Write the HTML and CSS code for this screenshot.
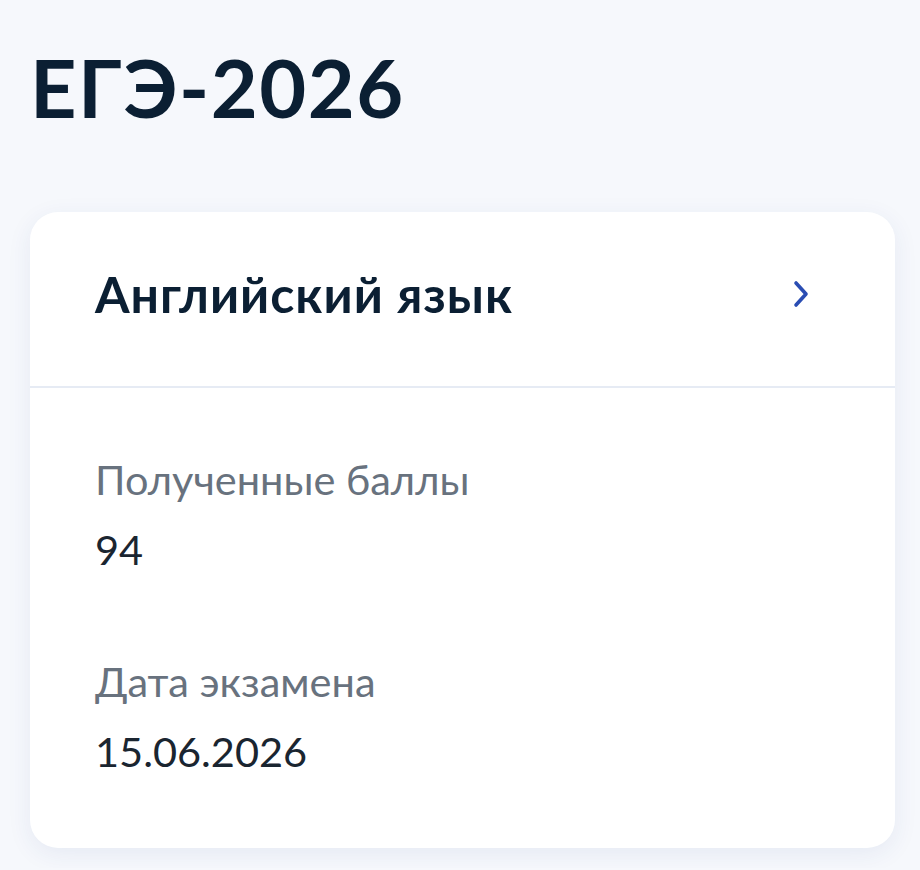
FILE: index.html
```html
<!DOCTYPE html>
<html lang="ru">
<head>
    <meta charset="UTF-8">
    <meta name="viewport" content="width=device-width, initial-scale=1.0">
    <title>ЕГЭ-2026</title>
    <link rel="stylesheet" href="styles.css">
</head>
<body>
    <div class="page">
        <h1 class="page-title">ЕГЭ-2026</h1>

        <div class="exam-card">
            <a class="exam-head" href="#">
                <span class="exam-subject">Английский язык</span>
                <svg class="chevron" width="18" height="28" viewBox="0 0 18 28">
                    <path d="M4 3 L14 14 L4 25" fill="none" stroke="#2a4db3" stroke-width="3.6" stroke-linecap="round" stroke-linejoin="round"/>
                </svg>
            </a>

            <div class="exam-body">
                <div class="field">
                    <div class="field-label">Полученные баллы</div>
                    <div class="field-value">94</div>
                </div>
                <div class="field">
                    <div class="field-label">Дата экзамена</div>
                    <div class="field-value">15.06.2026</div>
                </div>
            </div>
        </div>
    </div>
</body>
</html>
```

FILE: styles.css
```css
body {
    margin: 0;
    background: #f6f8fc;
    font-family: Lato, "Noto Sans", sans-serif;
    color: #0b1f33;
}

.page {
    padding: 38px 25px 20px 30px;
}

.page-title {
    margin: 0 0 77px;
    font-size: 81px;
    font-weight: 700;
    line-height: 1.2;
    letter-spacing: 1.5px;
    color: #0b1f33;
}

.exam-card {
    background: #fff;
    border-radius: 28px;
    box-shadow: 0 6px 24px rgba(40, 70, 140, 0.08);
}

.exam-head {
    display: flex;
    align-items: center;
    justify-content: space-between;
    padding: 52px 85px 62px 65px;
    border-bottom: 2px solid #e6ebf4;
    text-decoration: none;
    color: #0b1f33;
}

.exam-subject {
    font-size: 50px;
    font-weight: 700;
    line-height: 1.2;
    letter-spacing: 1px;
}

.chevron {
    display: block;
}

.exam-body {
    padding: 67px 65px 73px;
}

.field + .field {
    margin-top: 84px;
}

.field-label {
    font-size: 41.5px;
    line-height: 48px;
    color: #68727e;
}

.field-value {
    margin-top: 22px;
    font-size: 41.5px;
    line-height: 48px;
    color: #1a2530;
}
```
